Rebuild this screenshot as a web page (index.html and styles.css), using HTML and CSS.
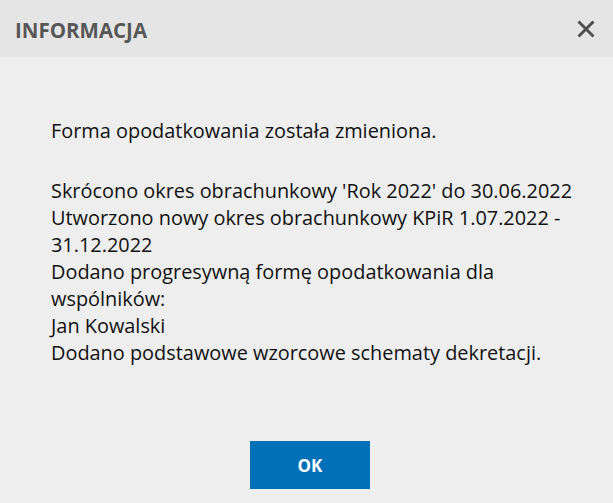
FILE: index.html
```html
<!DOCTYPE html>
<html lang="pl">
<head>
<meta charset="utf-8">
<link rel="stylesheet" href="styles.css">
</head>
<body>
<div class="dialog">
  <div class="header">
    <h1 class="title">INFORMACJA</h1>
    <button class="close" aria-label="Zamknij">
      <svg width="18" height="18" viewBox="0 0 18 18"><path d="M1.5 1.5L16.5 16.5M16.5 1.5L1.5 16.5" stroke="#505050" stroke-width="2.9" fill="none"/></svg>
    </button>
  </div>
  <div class="content">
    <p class="msg first">Forma opodatkowania została zmieniona.</p>
    <p class="msg">Skrócono okres obrachunkowy 'Rok 2022' do 30.06.2022<br>
Utworzono nowy okres obrachunkowy KPiR 1.07.2022 -<br>
31.12.2022<br>
Dodano progresywną formę opodatkowania dla<br>
wspólników:<br>
Jan Kowalski<br>
Dodano podstawowe wzorcowe schematy dekretacji.</p>
  </div>
  <div class="footer">
    <button class="ok">OK</button>
  </div>
</div>
</body>
</html>
```
FILE: styles.css
```css
html, body {
  margin: 0;
  padding: 0;
  background: #eeeeee;
}
.dialog {
  width: 613px;
  height: 503px;
  display: flex;
  flex-direction: column;
  background: #eeeeee;
  font-family: "Open Sans", "Noto Sans", sans-serif;
}
.header {
  height: 57px;
  background: #e5e5e5;
  display: flex;
  align-items: center;
  justify-content: space-between;
  padding: 0 18px 0 15px;
  box-sizing: border-box;
}
.title {
  margin: 2px 0 0 0;
  font-size: 20.5px;
  font-weight: 700;
  color: #575757;
}
.close {
  border: 0;
  background: none;
  padding: 0;
  width: 18px;
  height: 18px;
  display: flex;
}
.content {
  padding: 60px 0 0 51px;
  flex: 1;
}
.msg {
  margin: 0;
  font-size: 19.9px;
  line-height: 27px;
  color: #111;
  white-space: nowrap;
}
.msg.first {
  margin-bottom: 33px;
}
.footer {
  display: flex;
  justify-content: center;
  padding: 0 0 14px 7px;
}
.ok {
  width: 120px;
  height: 48px;
  border: 0;
  background: #0071b9;
  color: #fff;
  font-family: "Open Sans", sans-serif;
  font-weight: 700;
  font-size: 17px;
}
```
